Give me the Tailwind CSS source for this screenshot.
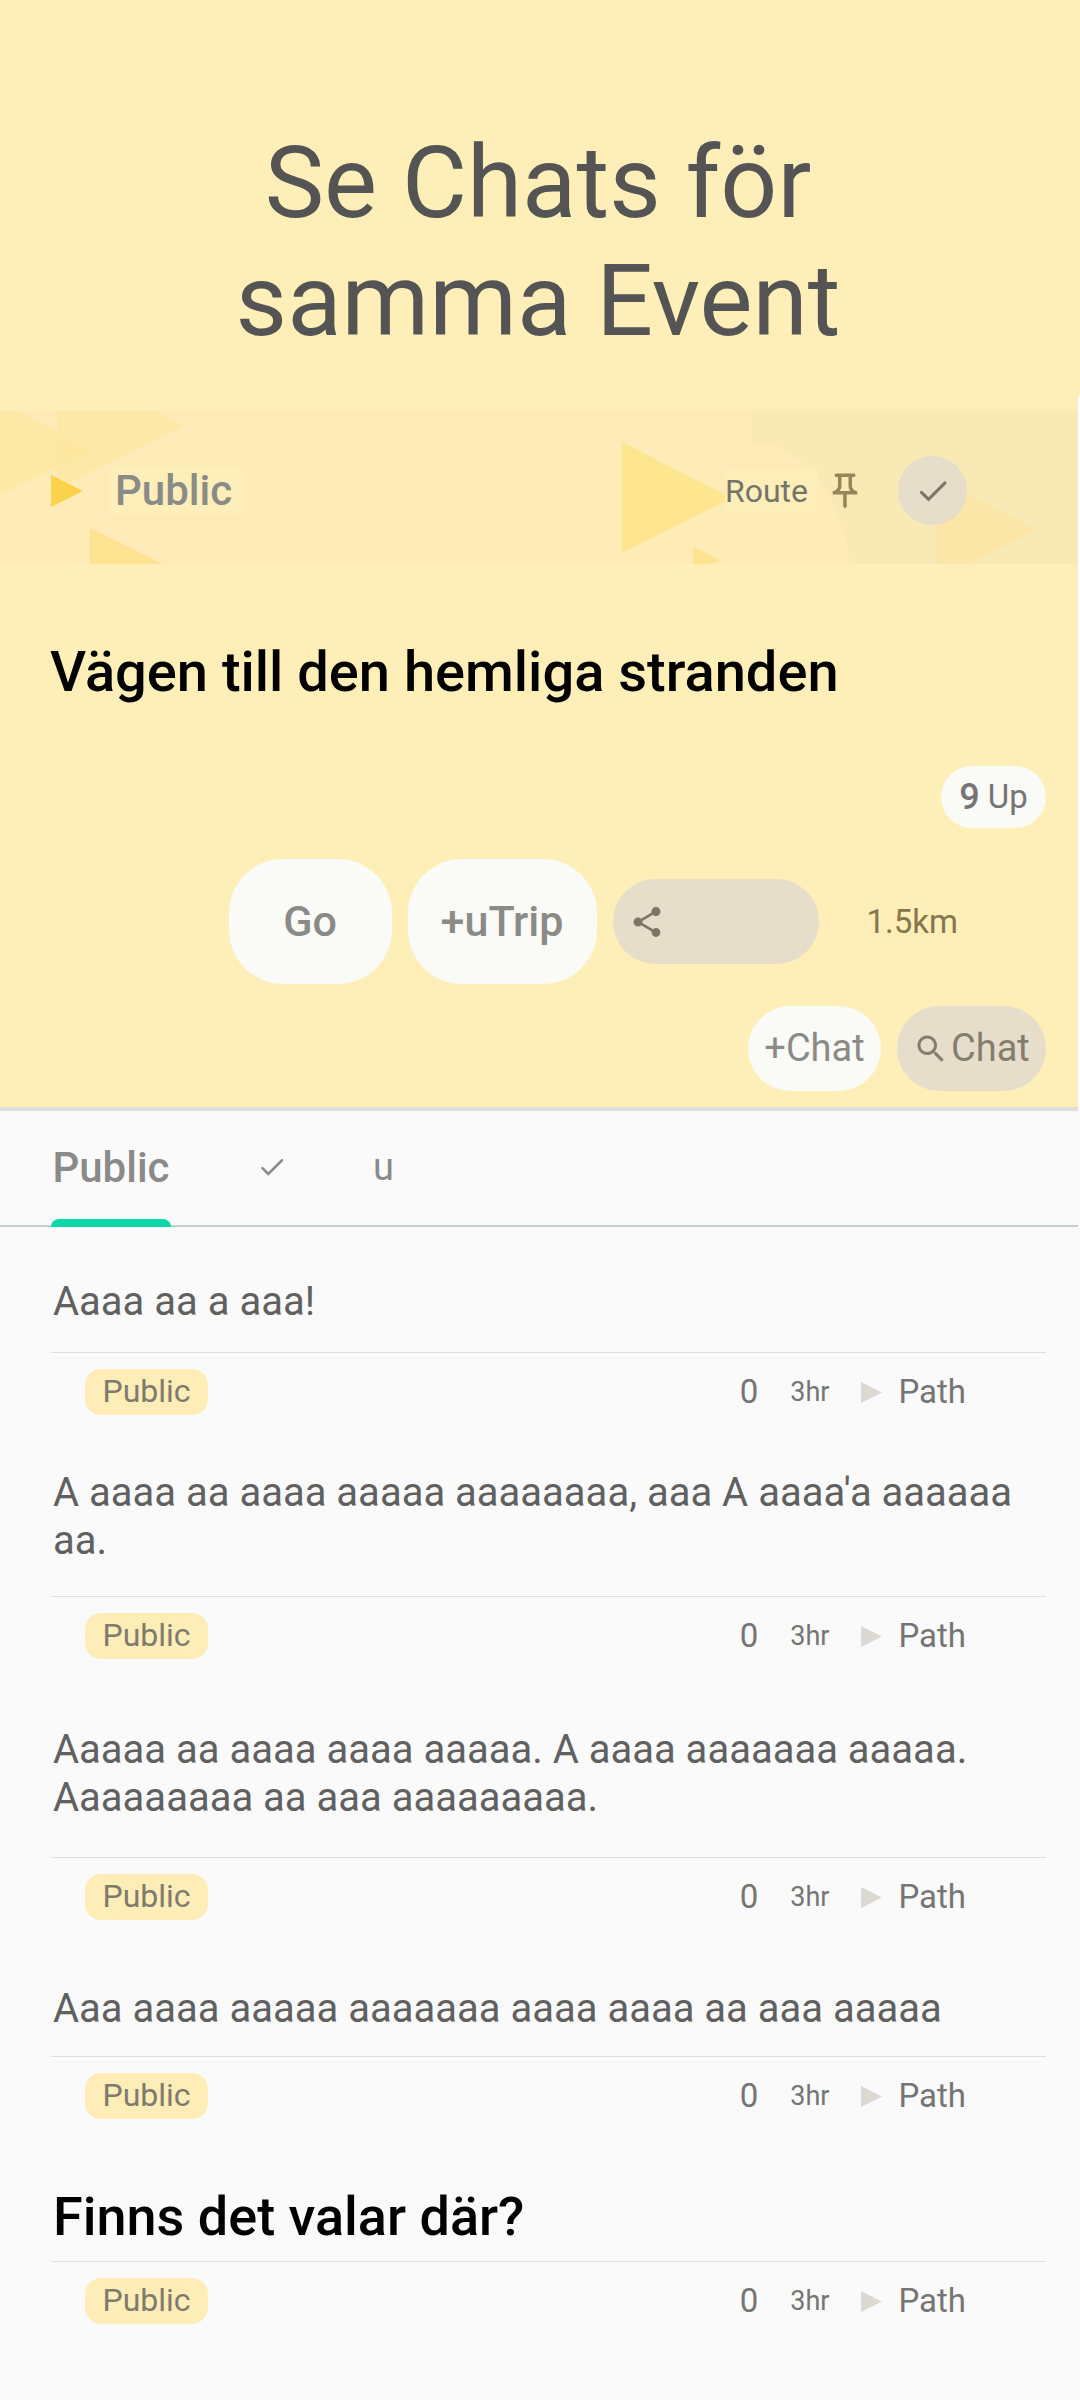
<!DOCTYPE html>
<html lang="sv">
  <head>
    <meta charset="UTF-8" />
    <title>Se Chats för samma Event</title>
    <meta name="viewport" content="width=device-width, initial-scale=1.0" />
    <script src="https://cdn.jsdelivr.net/npm/@tailwindcss/browser@4"></script>
  </head>
  <body class="bg-[#fafafa] font-['Roboto',sans-serif] text-[#757575]">
    <!-- icons used more than once -->
    <svg class="hidden">
      <symbol id="check" viewBox="0 0 24 24">
        <path d="M4.3 12.9 9 17.6 20 6.6" fill="none" stroke="currentColor" stroke-width="2" stroke-linecap="round" />
      </symbol>
      <symbol id="play" viewBox="0 0 10 10" preserveAspectRatio="none">
        <path d="M0 0 10 5 0 10z" fill="currentColor" />
      </symbol>
    </svg>

    <header class="bg-[#feeeb7] pt-[124px] pr-1 pb-9">
      <h1 class="mx-auto max-w-[700px] text-center text-[100px] leading-[118px] text-[#545454]">
        Se Chats för samma Event
      </h1>
    </header>

    <main>
      <section class="bg-[#feeeb7] border-r-2 border-white">
        <div class="pt-[15px]">
          <div class="relative h-[153px] overflow-hidden bg-[#feebb8]">
            <svg class="absolute inset-0 h-full w-full" viewBox="0 0 1078 153" preserveAspectRatio="none">
              <path d="M752 0H1078V153H850Q849 141 846 129 841 112 833 94 826 78 815 64 807 54 795 46 785 38 774 33H752z" fill="#f9e9b4" />
              <path d="M0 0H18L92 40 0 84z" fill="#fee8a5" />
              <path d="M57 0H157L184 15 57 77z" fill="#fee69e" fill-opacity=".65" />
              <path d="M90 117 163 153H90z" fill="#fee492" />
              <path d="M622 31 732 87 622 142z" fill="#fee590" />
              <path d="M693 135 720 149 712 153H693z" fill="#fee490" />
              <path d="M937 67 1036 119 968 153H937z" fill="#fbe6a8" />
            </svg>
            <div class="relative flex h-full items-center pt-1.5 pr-[111px] pl-[51px]">
              <svg class="h-8 w-8 text-[#fdd24a]"><use href="#play" /></svg>
              <a href="#public" class="ml-6.5 bg-[#feeeb9] pr-3 pl-1.5 text-[42px] leading-12 font-medium text-[#8a8a86]">Public</a>
              <a href="#route" class="ml-auto bg-[#feeeb9] pr-2.5 text-[32px] leading-11 text-[#757468]">Route</a>
              <button aria-label="Fäst" class="ml-1.5 text-[#958558]">
                <svg class="h-[42px] w-[42px]" viewBox="0 0 24 24" fill="currentColor">
                  <path d="M14 4v5c0 1.12.37 2.16 1 3H9c.65-.86 1-1.9 1-3V4h4m3-2H7c-.55 0-1 .45-1 1s.45 1 1 1h1v5c0 1.66-1.34 3-3 3v2h5.97v7l1 1 1-1v-7H19v-2c-1.66 0-3-1.34-3-3V4h1c.55 0 1-.45 1-1s-.45-1-1-1z" />
                </svg>
              </button>
              <button aria-label="Klar" class="ml-8 flex h-[69px] w-[69px] items-center justify-center rounded-full bg-[#e6deca] text-[#7d7666]">
                <svg class="h-9 w-9"><use href="#check" /></svg>
              </button>
            </div>
          </div>
        </div>

        <h2 class="mt-[76px] px-[50px] text-[56px] leading-16 font-medium text-black">
          Vägen till den hemliga stranden
        </h2>

        <div class="mt-[62px] flex justify-end pr-8">
          <button class="flex h-[62px] w-[105px] items-center justify-center gap-2 rounded-full bg-[#fafaf6] text-[33px]">
            <span class="text-[36px] font-medium">9</span>
            <span>Up</span>
          </button>
        </div>

        <div class="mt-[31px] flex items-center justify-end gap-4 pr-[120px]">
          <button class="h-[125px] w-[163px] rounded-[54px] bg-[#fafaf6] text-[43px] font-medium text-[#8a8a86]">Go</button>
          <button class="h-[125px] w-[189px] rounded-[54px] bg-[#fafaf6] text-[43px] font-medium text-[#8a8a86]">+uTrip</button>
          <button aria-label="Dela" class="flex h-[85px] w-[206px] items-center rounded-full bg-[#e6deca] pl-4 text-[#7d7666]">
            <svg class="h-9 w-9" viewBox="0 0 24 24" fill="currentColor">
              <path d="M18 16.08c-.76 0-1.44.3-1.96.77L8.91 12.7c.05-.23.09-.46.09-.7s-.04-.47-.09-.7l7.05-4.11c.54.5 1.25.81 2.04.81 1.66 0 3-1.34 3-3s-1.34-3-3-3-3 1.34-3 3c0 .24.04.47.09.7L8.04 9.81C7.5 9.31 6.79 9 6 9c-1.66 0-3 1.34-3 3s1.34 3 3 3c.79 0 1.5-.31 2.04-.81l7.12 4.16c-.05.21-.08.43-.08.65 0 1.61 1.31 2.92 2.92 2.92s2.92-1.31 2.92-2.92-1.31-2.92-2.92-2.92z" />
            </svg>
          </button>
          <span class="ml-8 text-[33px] text-[#857650]">1.5km</span>
        </div>

        <div class="mt-[22px] flex justify-end gap-4 pr-8 pb-4 text-[38px]">
          <button class="h-[85px] w-[133px] rounded-full bg-[#fafaf6] text-[#8a8a86]">+Chat</button>
          <button class="flex h-[85px] w-[149px] items-center gap-0.5 rounded-full bg-[#e6deca] pl-4 text-[#857e6e]">
            <svg class="h-9 w-9" viewBox="0 0 24 24" fill="currentColor">
              <path d="M15.5 14h-.79l-.28-.27C15.41 12.59 16 11.11 16 9.5 16 5.91 13.09 3 9.5 3S3 5.91 3 9.5 5.91 16 9.5 16c1.61 0 3.09-.59 4.23-1.57l.27.28v.79l5 4.99L20.49 19l-4.99-5zm-6 0C7.01 14 5 11.99 5 9.5S7.01 5 9.5 5 14 7.01 14 9.5 11.99 14 9.5 14z" />
            </svg>
            <span>Chat</span>
          </button>
        </div>
      </section>

      <nav class="mr-0.5 flex h-[120px] border-t-4 border-b-2 border-t-[#dedede] border-b-[#c5cfcb] pl-[51px] text-[#8a8a8a]">
        <a href="#public" class="relative flex w-[120px] items-center justify-center pb-0.5 text-[42px] font-medium">
          Public
          <span class="absolute inset-x-0 -bottom-0.5 h-2 rounded-t-lg bg-[#0dd8aa]"></span>
        </a>
        <a href="#done" aria-label="Klara" class="ml-[86px] flex items-center pb-0.5">
          <svg class="h-[30px] w-[30px]"><use href="#check" /></svg>
        </a>
        <a href="#u" class="ml-[86px] flex items-center pb-0.5 text-[38px]">u</a>
      </nav>

      <div id="public" class="pr-[34px] pl-[51px]">
        <article class="pt-[51px]">
          <p class="px-0.5 pb-[26px] text-[40px] leading-12 text-[#606060]">Aaaa aa a aaa!</p>
          <footer class="flex items-center border-t border-[#e0e0e0] pt-4 pr-20 pl-[34px] leading-11">
            <span class="h-[46px] w-[123px] rounded-2xl bg-[#feedb7] text-center text-[32px] text-[#7f7b6c]">Public</span>
            <span class="ml-auto text-[33px]/11">0</span>
            <time class="ml-8 text-[27px]/11">3hr</time>
            <svg class="ml-8 h-[21px] w-[21px] text-[#dcd9d3]"><use href="#play" /></svg>
            <a href="#path" class="ml-4 text-[33px]/11">Path</a>
          </footer>
        </article>

        <article class="pt-[54px]">
          <p class="px-0.5 pb-[31px] text-[40px] leading-12 text-[#606060]">A aaaa aa aaaa aaaaa aaaaaaaa, aaa A aaaa'a aaaaaa aa.</p>
          <footer class="flex items-center border-t border-[#e0e0e0] pt-4 pr-20 pl-[34px] leading-11">
            <span class="h-[46px] w-[123px] rounded-2xl bg-[#feedb7] text-center text-[32px] text-[#7f7b6c]">Public</span>
            <span class="ml-auto text-[33px]/11">0</span>
            <time class="ml-8 text-[27px]/11">3hr</time>
            <svg class="ml-8 h-[21px] w-[21px] text-[#dcd9d3]"><use href="#play" /></svg>
            <a href="#path" class="ml-4 text-[33px]/11">Path</a>
          </footer>
        </article>

        <article class="pt-[67px]">
          <p class="px-0.5 pb-[35px] text-[40px] leading-12 text-[#606060]">Aaaaa aa aaaa aaaa aaaaa. A aaaa aaaaaaa aaaaa. Aaaaaaaaa aa aaa aaaaaaaaa.</p>
          <footer class="flex items-center border-t border-[#e0e0e0] pt-4 pr-20 pl-[34px] leading-11">
            <span class="h-[46px] w-[123px] rounded-2xl bg-[#feedb7] text-center text-[32px] text-[#7f7b6c]">Public</span>
            <span class="ml-auto text-[33px]/11">0</span>
            <time class="ml-8 text-[27px]/11">3hr</time>
            <svg class="ml-8 h-[21px] w-[21px] text-[#dcd9d3]"><use href="#play" /></svg>
            <a href="#path" class="ml-4 text-[33px]/11">Path</a>
          </footer>
        </article>

        <article class="pt-[65px]">
          <p class="px-0.5 pb-[23px] text-[40px] leading-12 text-[#606060]">Aaa aaaa aaaaa aaaaaaa aaaa aaaa aa aaa aaaaa</p>
          <footer class="flex items-center border-t border-[#e0e0e0] pt-4 pr-20 pl-[34px] leading-11">
            <span class="h-[46px] w-[123px] rounded-2xl bg-[#feedb7] text-center text-[32px] text-[#7f7b6c]">Public</span>
            <span class="ml-auto text-[33px]/11">0</span>
            <time class="ml-8 text-[27px]/11">3hr</time>
            <svg class="ml-8 h-[21px] w-[21px] text-[#dcd9d3]"><use href="#play" /></svg>
            <a href="#path" class="ml-4 text-[33px]/11">Path</a>
          </footer>
        </article>

        <article class="pt-[66px] pb-[74px]">
          <h3 class="px-0.5 pb-3 text-[54px] leading-16 font-medium text-black">Finns det valar där?</h3>
          <footer class="flex items-center border-t border-[#e0e0e0] pt-4 pr-20 pl-[34px] leading-11">
            <span class="h-[46px] w-[123px] rounded-2xl bg-[#feedb7] text-center text-[32px] text-[#7f7b6c]">Public</span>
            <span class="ml-auto text-[33px]/11">0</span>
            <time class="ml-8 text-[27px]/11">3hr</time>
            <svg class="ml-8 h-[21px] w-[21px] text-[#dcd9d3]"><use href="#play" /></svg>
            <a href="#path" class="ml-4 text-[33px]/11">Path</a>
          </footer>
        </article>
      </div>
    </main>
  </body>
</html>
